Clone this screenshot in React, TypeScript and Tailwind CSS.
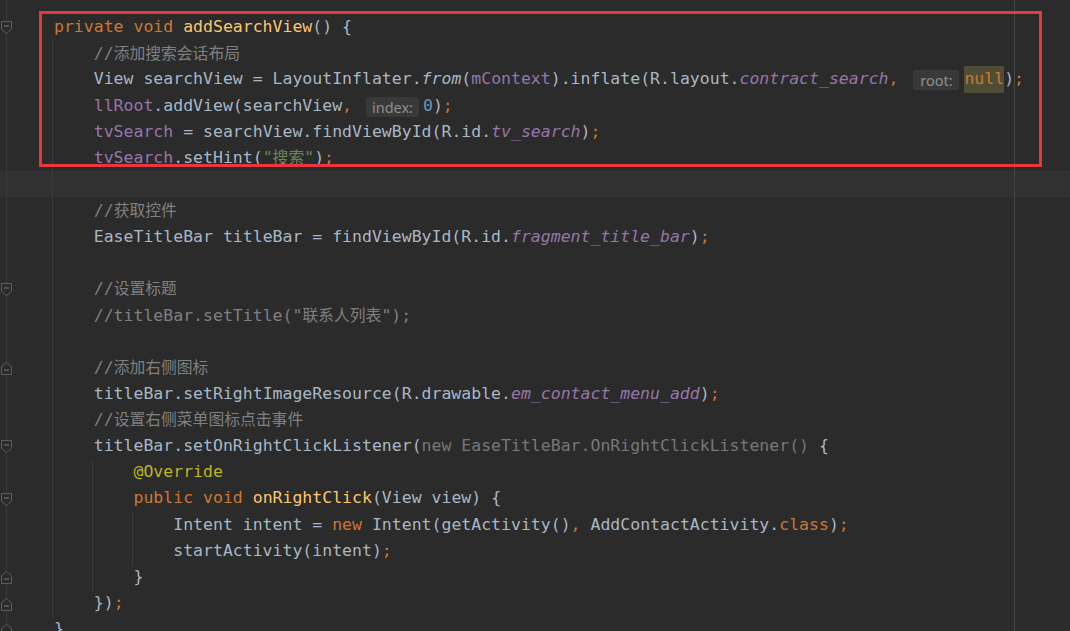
import React from "react";

type Tok = { t: string; c?: string; hint?: string; hw?: string; hl?: boolean };

const K = "text-[#cc7832]";
const F = "text-[#ffc66d]";
const C = "text-[#808080]";
const D = "text-[#a9b7c6]";
const P = "text-[#9876aa]";
const PI = "text-[#9876aa] italic";
const DI = "text-[#a9b7c6] italic";
const N = "text-[#6897bb]";
const S = "text-[#6a8759]";
const A = "text-[#bbb529]";
const G = "text-[#787878]";

type Line = { indent: number; toks: Tok[] };

const lines: Line[] = [
  { indent: 0, toks: [{ t: "private void ", c: K }, { t: "addSearchView", c: F }, { t: "() {", c: D }] },
  { indent: 1, toks: [{ t: "//添加搜索会话布局", c: C }] },
  {
    indent: 1,
    toks: [
      { t: "View searchView = LayoutInflater.", c: D },
      { t: "from", c: DI },
      { t: "(", c: D },
      { t: "mContext", c: P },
      { t: ").inflate(R.layout.", c: D },
      { t: "contract_search", c: PI },
      { t: ",", c: K },
      { t: " ", c: D },
      { t: "", hint: "root:", hw: "root" },
      { t: "null", c: K, hl: true },
      { t: ")", c: D },
      { t: ";", c: K },
    ],
  },
  {
    indent: 1,
    toks: [
      { t: "llRoot", c: P },
      { t: ".addView(searchView", c: D },
      { t: ",", c: K },
      { t: " ", c: D },
      { t: "", hint: "index:", hw: "index" },
      { t: "0", c: N },
      { t: ")", c: D },
      { t: ";", c: K },
    ],
  },
  {
    indent: 1,
    toks: [
      { t: "tvSearch", c: P },
      { t: " = searchView.findViewById(R.id.", c: D },
      { t: "tv_search", c: PI },
      { t: ")", c: D },
      { t: ";", c: K },
    ],
  },
  {
    indent: 1,
    toks: [
      { t: "tvSearch", c: P },
      { t: ".setHint(", c: D },
      { t: "\"搜索\"", c: S },
      { t: ")", c: D },
      { t: ";", c: K },
    ],
  },
  { indent: 0, toks: [] },
  { indent: 1, toks: [{ t: "//获取控件", c: C }] },
  {
    indent: 1,
    toks: [
      { t: "EaseTitleBar titleBar = findViewById(R.id.", c: D },
      { t: "fragment_title_bar", c: PI },
      { t: ")", c: D },
      { t: ";", c: K },
    ],
  },
  { indent: 0, toks: [] },
  { indent: 1, toks: [{ t: "//设置标题", c: C }] },
  { indent: 1, toks: [{ t: "//titleBar.setTitle(\"联系人列表\");", c: C }] },
  { indent: 0, toks: [] },
  { indent: 1, toks: [{ t: "//添加右侧图标", c: C }] },
  {
    indent: 1,
    toks: [
      { t: "titleBar.setRightImageResource(R.drawable.", c: D },
      { t: "em_contact_menu_add", c: PI },
      { t: ")", c: D },
      { t: ";", c: K },
    ],
  },
  { indent: 1, toks: [{ t: "//设置右侧菜单图标点击事件", c: C }] },
  {
    indent: 1,
    toks: [
      { t: "titleBar.setOnRightClickListener(", c: D },
      { t: "new EaseTitleBar.OnRightClickListener()", c: G },
      { t: " {", c: D },
    ],
  },
  { indent: 2, toks: [{ t: "@Override", c: A }] },
  {
    indent: 2,
    toks: [
      { t: "public void ", c: K },
      { t: "onRightClick", c: F },
      { t: "(View view) {", c: D },
    ],
  },
  {
    indent: 3,
    toks: [
      { t: "Intent intent = ", c: D },
      { t: "new", c: K },
      { t: " Intent(getActivity()", c: D },
      { t: ", ", c: K },
      { t: "AddContactActivity.", c: D },
      { t: "class", c: K },
      { t: ")", c: D },
      { t: ";", c: K },
    ],
  },
  { indent: 3, toks: [{ t: "startActivity(intent)", c: D }, { t: ";", c: K }] },
  { indent: 2, toks: [{ t: "}", c: D }] },
  { indent: 1, toks: [{ t: "})", c: D }, { t: ";", c: K }] },
  { indent: 0, toks: [{ t: "}", c: D }] },
];

const CJK = /([\u3000-\u303f\u4e00-\u9fff]+)/;

function Text({ t }: { t: string }) {
  const parts = t.split(CJK);
  return (
    <>
      {parts.map((p, i) =>
        CJK.test(p) ? (
          <span
            key={i}
            className="text-[15.8px] font-['Noto_Sans_CJK_SC',sans-serif]"
          >
            {p}
          </span>
        ) : (
          <React.Fragment key={i}>{p}</React.Fragment>
        )
      )}
    </>
  );
}

function Hint({ label, kind }: { label: string; kind: string }) {
  const box =
    kind === "root"
      ? "ml-[5px] mr-[5px] w-[46px]"
      : "ml-[4px] mr-[4px] w-[53px]";
  return (
    <span
      className={`${box} h-[20px] mt-[2px] flex items-center justify-center rounded-[4px] bg-[#393939] text-[#8f8f8f] text-[14.5px] leading-[20px] font-['Noto_Sans',sans-serif] not-italic`}
    >
      {label}
    </span>
  );
}

function FoldMarker({ top, dir }: { top: number; dir: "down" | "up" }) {
  return (
    <svg
      className="absolute left-0"
      style={{ top: top - 7 }}
      width="13"
      height="15"
      viewBox="0 0 13 15"
    >
      {dir === "down" ? (
        <>
          <path d="M1.5 1.5 H11.5 V9.5 L6.5 13.5 L1.5 9.5 Z" fill="#2b2b2b" stroke="#5e5e5e" strokeWidth="1" />
          <path d="M4 6 H9" stroke="#7a7a7a" strokeWidth="1" />
        </>
      ) : (
        <>
          <path d="M1.5 13.5 H11.5 V5.5 L6.5 1.5 L1.5 5.5 Z" fill="#2b2b2b" stroke="#5e5e5e" strokeWidth="1" />
          <path d="M4 9 H9" stroke="#7a7a7a" strokeWidth="1" />
        </>
      )}
    </svg>
  );
}

const LH = 26.2;
const TOP = 14;

export default function App() {
  const center = (i: number) => TOP + i * LH + LH / 2;
  const folds: { i: number; dir: "down" | "up" }[] = [
    { i: 0, dir: "down" },
    { i: 10, dir: "down" },
    { i: 13, dir: "up" },
    { i: 16, dir: "down" },
    { i: 18, dir: "down" },
    { i: 21, dir: "up" },
    { i: 22, dir: "up" },
    { i: 23, dir: "up" },
  ];
  return (
    <div className="relative w-[1070px] h-[631px] overflow-hidden bg-[#2b2b2b] font-['DejaVu_Sans_Mono',monospace] text-[16.5px]">
      {/* code lines */}
      <div className="flex flex-col pt-[14px]">
        {lines.map((ln, i) => (
          <div
            key={i}
            className={`flex items-center h-[26.2px] leading-[26.2px] pl-[54px] whitespace-pre ${
              i === 6 ? "bg-[#323232]" : ""
            }`}
          >
            {ln.indent > 0 && <span>{"    ".repeat(ln.indent)}</span>}
            {ln.toks.map((tk, j) =>
              tk.hint ? (
                <Hint key={j} label={tk.hint} kind={tk.hw || ""} />
              ) : (
                <span
                  key={j}
                  className={`${tk.c || ""} ${tk.hl ? "bg-[#504d37] self-stretch" : ""}`}
                >
                  <Text t={tk.t} />
                </span>
              )
            )}
          </div>
        ))}
      </div>

      {/* gutter fold line */}
      <div className="absolute left-[6px] top-0 w-px h-full bg-[#3a3a3a]" />
      {folds.map((f) => (
        <FoldMarker key={f.i} top={center(f.i)} dir={f.dir} />
      ))}

      {/* indent guides */}
      <div className="absolute left-[52px] top-[40px] w-px h-[578px] bg-[#3a3a3a]" />
      <div className="absolute left-[92px] top-[460px] w-px h-[132px] bg-[#3a3a3a]" />
      <div className="absolute left-[132px] top-[512px] w-px h-[54px] bg-[#3a3a3a]" />

      {/* right margin */}
      <div className="absolute left-[1014px] top-0 w-px h-full bg-[#444444]" />

      {/* red annotation box */}
      <div className="absolute left-[39px] top-[11px] w-[1003px] h-[156px] border-[3px] border-[#e8383d]" />
    </div>
  );
}
